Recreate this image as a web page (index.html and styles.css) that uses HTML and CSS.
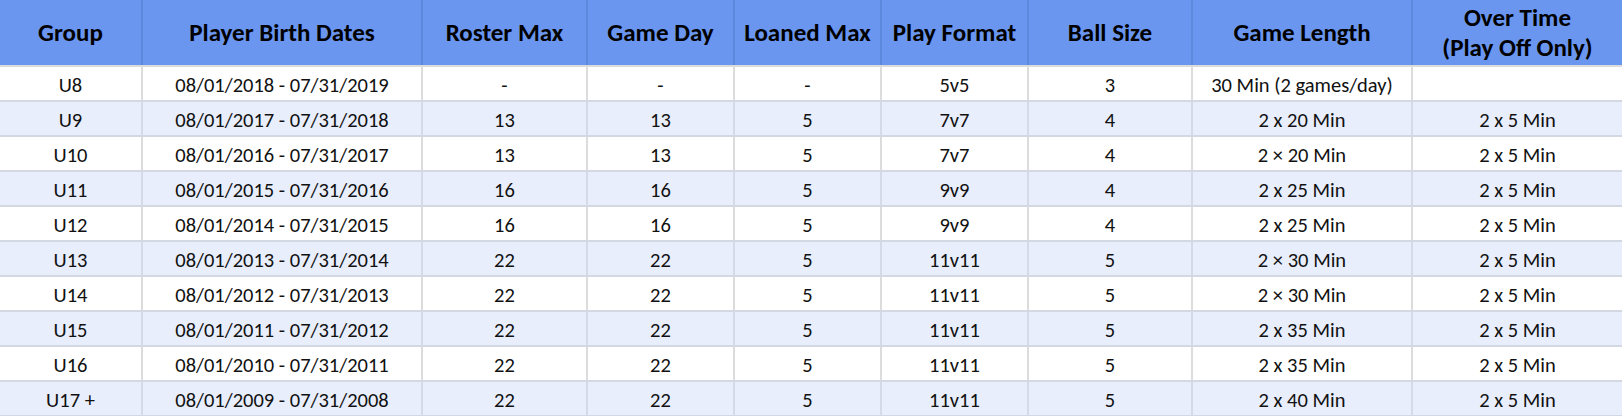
FILE: index.html
```html
<!DOCTYPE html>
<html>
<head>
<meta charset="utf-8">
<link rel="stylesheet" href="styles.css">
</head>
<body>
<table class="grid">
  <colgroup>
    <col class="c1"><col class="c2"><col class="c3"><col class="c4"><col class="c5"><col class="c6"><col class="c7"><col class="c8"><col class="c9">
  </colgroup>
  <thead>
    <tr class="head-row">
      <th>Group</th>
      <th>Player Birth Dates</th>
      <th>Roster Max</th>
      <th>Game Day</th>
      <th>Loaned Max</th>
      <th>Play Format</th>
      <th>Ball Size</th>
      <th>Game Length</th>
      <th>Over Time<br>(Play Off Only)</th>
    </tr>
  </thead>
  <tbody>
    <tr><td>U8</td><td>08/01/2018 - 07/31/2019</td><td>-</td><td>-</td><td>-</td><td>5v5</td><td>3</td><td>30 Min (2 games/day)</td><td></td></tr>
    <tr><td>U9</td><td>08/01/2017 - 07/31/2018</td><td>13</td><td>13</td><td>5</td><td>7v7</td><td>4</td><td>2 x 20 Min</td><td>2 x 5 Min</td></tr>
    <tr><td>U10</td><td>08/01/2016 - 07/31/2017</td><td>13</td><td>13</td><td>5</td><td>7v7</td><td>4</td><td>2 × 20 Min</td><td>2 x 5 Min</td></tr>
    <tr><td>U11</td><td>08/01/2015 - 07/31/2016</td><td>16</td><td>16</td><td>5</td><td>9v9</td><td>4</td><td>2 x 25 Min</td><td>2 x 5 Min</td></tr>
    <tr><td>U12</td><td>08/01/2014 - 07/31/2015</td><td>16</td><td>16</td><td>5</td><td>9v9</td><td>4</td><td>2 x 25 Min</td><td>2 x 5 Min</td></tr>
    <tr><td>U13</td><td>08/01/2013 - 07/31/2014</td><td>22</td><td>22</td><td>5</td><td>11v11</td><td>5</td><td>2 × 30 Min</td><td>2 x 5 Min</td></tr>
    <tr><td>U14</td><td>08/01/2012 - 07/31/2013</td><td>22</td><td>22</td><td>5</td><td>11v11</td><td>5</td><td>2 × 30 Min</td><td>2 x 5 Min</td></tr>
    <tr><td>U15</td><td>08/01/2011 - 07/31/2012</td><td>22</td><td>22</td><td>5</td><td>11v11</td><td>5</td><td>2 x 35 Min</td><td>2 x 5 Min</td></tr>
    <tr><td>U16</td><td>08/01/2010 - 07/31/2011</td><td>22</td><td>22</td><td>5</td><td>11v11</td><td>5</td><td>2 x 35 Min</td><td>2 x 5 Min</td></tr>
    <tr><td>U17 +</td><td>08/01/2009 - 07/31/2008</td><td>22</td><td>22</td><td>5</td><td>11v11</td><td>5</td><td>2 x 40 Min</td><td>2 x 5 Min</td></tr>
  </tbody>
</table>
</body>
</html>
```
FILE: styles.css
```css
html, body {
  margin: 0;
  padding: 0;
  background: #ffffff;
}
body {
  font-family: "Carlito", "Lato", "Open Sans", sans-serif;
  color: #111111;
}
.grid {
  width: 1622px;
  table-layout: fixed;
  border-collapse: collapse;
  border-spacing: 0;
}
.c1 { width: 142px; }
.c2 { width: 280px; }
.c3 { width: 165px; }
.c4 { width: 147px; }
.c5 { width: 147px; }
.c6 { width: 147px; }
.c7 { width: 164px; }
.c8 { width: 220px; }
.c9 { width: 210px; }
.grid .head-row { height: 66px; }
.grid tbody tr { height: 35px; }
.grid th {
  background: #6a96f0;
  color: #000000;
  font-weight: 700;
  font-size: 25px;
  line-height: 30px;
  padding: 0;
  text-align: center;
  vertical-align: middle;
  border-left: 2px solid #5e88dc;
  border-bottom: 2px solid #dcdcdc;
  white-space: nowrap;
}
.grid th:first-child { border-left: none; }
.grid td {
  font-size: 20.5px;
  line-height: 24px;
  padding: 3px 0 0 0;
  text-align: center;
  vertical-align: middle;
  border-left: 2px solid #dcdcdc;
  border-bottom: 2px solid #d3d8e2;
  white-space: nowrap;
}
.grid td:first-child { border-left: none; }
.grid tbody tr:nth-child(even) td {
  background: #e8eefc;
  border-left-color: #d4dae6;
}
.grid tbody tr:nth-child(even) td:first-child { border-left: none; }
```
